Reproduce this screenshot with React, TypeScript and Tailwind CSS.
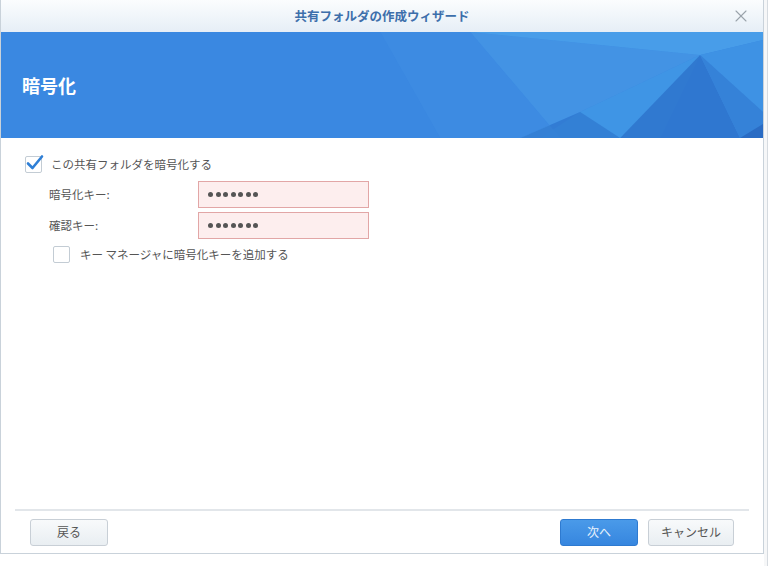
import { X } from 'lucide-react';

const jp = { fontFamily: '"Noto Sans CJK JP", "Noto Sans", sans-serif' };

function BannerArt() {
  return (
    <svg className="absolute inset-0 h-full w-full" viewBox="0 0 763 106" preserveAspectRatio="none">
      <polygon points="380,0 470,0 560,106 440,106" fill="#3f8de3" opacity="0.6" />
      <polygon points="470,0 700,23 580,80 520,106 560,106" fill="#4a9ce8" opacity="0.55" />
      <polygon points="470,0 763,0 763,8 700,23" fill="#4ea6ec" opacity="0.7" />
      <polygon points="580,80 700,23 660,106 540,106" fill="#4199e6" opacity="0.8" />
      <polygon points="520,106 580,80 620,106" fill="#2f77cf" opacity="0.7" />
      <polygon points="620,106 700,23 740,106" fill="#2e74cc" opacity="0.85" />
      <polygon points="700,23 763,8 763,80" fill="#3e92e4" />
      <polygon points="700,23 763,80 763,106 740,106" fill="#3582d8" />
      <polygon points="740,106 763,92 763,106" fill="#2a6cc4" />
    </svg>
  );
}

function Checkbox({ checked }: { checked?: boolean }) {
  return (
    <div className="relative h-[17px] w-[17px] rounded-[2px] border border-[#c3ccd4] bg-white">
      {checked && (
        <svg className="absolute -left-[1px] -top-[4px]" width="20" height="20" viewBox="0 0 20 20">
          <path d="M3 10.5 L7.5 15 L17 3.5" fill="none" stroke="#2f7fd6" strokeWidth="2.6" strokeLinecap="round" strokeLinejoin="round" />
        </svg>
      )}
    </div>
  );
}

function KeyField({ label }: { label: string }) {
  return (
    <div className="flex items-center">
      <span className="w-[149px] text-[11.5px] text-[#555]">{label}</span>
      <div className="flex h-[27px] w-[171px] items-center gap-[2.5px] border border-[#e2a6a6] bg-[#fdeeee] px-[9px]">
        {[0, 1, 2, 3, 4, 5, 6].map((i) => (
          <span key={i} className="h-[5px] w-[5px] rounded-full bg-[#555]" />
        ))}
      </div>
    </div>
  );
}

export default function App() {
  return (
    <div className="flex h-[566px] w-[768px] overflow-hidden bg-white" style={jp}>
      <div className="flex h-[554px] w-[764px] flex-col border-l border-r border-b border-[#c9d2da] bg-white">
        <div className="relative flex h-[32px] items-center justify-center bg-gradient-to-b from-[#fbfdfe] to-[#e6eef6]">
          <span className="text-[12.5px] font-bold text-[#3d6fab]">共有フォルダの作成ウィザード</span>
          <X className="absolute right-[12px] top-[6px] h-[20px] w-[20px] text-[#9aa3ab]" strokeWidth={1.3} />
        </div>
        <div className="relative h-[106px] bg-[#3a88e1]">
          <BannerArt />
          <div className="relative flex h-full items-center pl-[21px]">
            <span className="text-[18px] font-bold text-white">暗号化</span>
          </div>
        </div>
        <div className="flex flex-1 flex-col pl-[24px] pt-[18px]">
          <div className="flex items-center gap-[9px]">
            <Checkbox checked />
            <span className="text-[11.5px] text-[#555]">この共有フォルダを暗号化する</span>
          </div>
          <div className="mt-[8px] flex flex-col gap-[4px] pl-[24px]">
            <KeyField label="暗号化キー:" />
            <KeyField label="確認キー:" />
          </div>
          <div className="mt-[7px] flex items-center gap-[10px] pl-[28px]">
            <Checkbox />
            <span className="text-[11.5px] text-[#555]">キー マネージャに暗号化キーを追加する</span>
          </div>
        </div>
        <div className="mx-[14px] h-[2px] bg-[#e2e6ea]" />
        <div className="flex h-[42px] items-center justify-between pl-[29px] pr-[29px]">
          <button className="h-[27px] w-[78px] rounded-[3px] border border-[#c8cfd6] bg-gradient-to-b from-[#f8fafb] to-[#e9eef2] text-[12px] text-[#555]">戻る</button>
          <div className="flex gap-[10px]">
            <button className="h-[27px] w-[78px] rounded-[3px] border border-[#2e7ad0] bg-gradient-to-b from-[#4a9ae9] to-[#3686df] text-[12px] text-[#e8f2fc]">次へ</button>
            <button className="h-[27px] w-[86px] rounded-[3px] border border-[#c8cfd6] bg-gradient-to-b from-[#f8fafb] to-[#e9eef2] text-[12px] text-[#555]">キャンセル</button>
          </div>
        </div>
      </div>
      <div className="flex-1 border-r border-[#d6dbe0] bg-[#f6f7f8]" />
    </div>
  );
}
